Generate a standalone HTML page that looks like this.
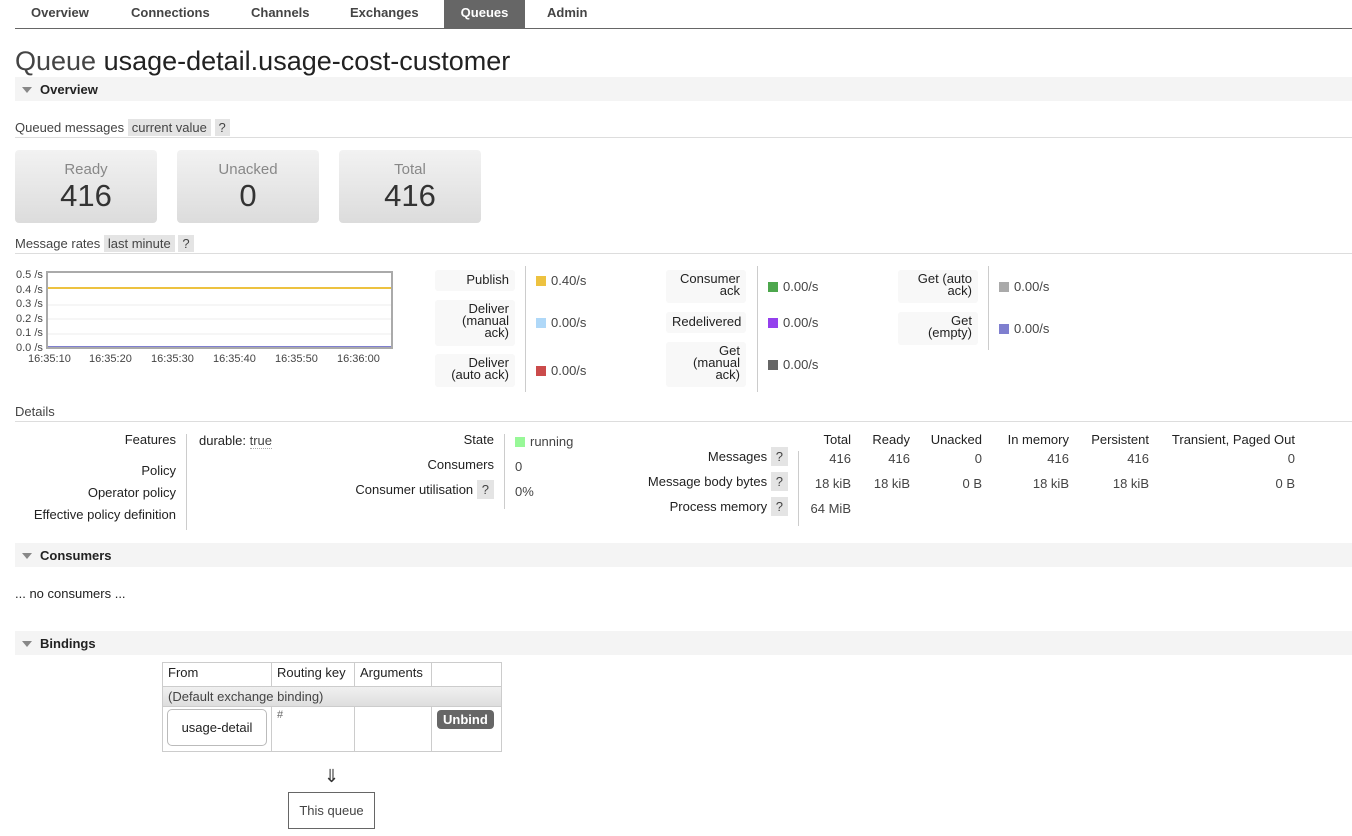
<!DOCTYPE html>
<html><head><meta charset="utf-8"><style>
*{margin:0;padding:0;box-sizing:border-box}
body{width:1352px;height:836px;position:relative;background:#fff;font-family:"Liberation Sans",sans-serif;font-size:13px;color:#222;overflow:hidden}
.a{position:absolute;white-space:nowrap}
.tab{position:absolute;top:0;height:28px;line-height:25px;font-weight:bold;color:#444;font-size:13px}
.bar{position:absolute;left:15px;right:0;height:24px;background:#f4f4f4}
.bar b{position:absolute;left:25px;top:5px;font-size:13px}
.tri{position:absolute;left:7px;top:10px;width:0;height:0;border-left:5px solid transparent;border-right:5px solid transparent;border-top:6px solid #888}
.hr{position:absolute;left:15px;right:0;height:1px;background:#ddd}
.pill{background:#e4e4e4;padding:1px 4px;color:#444}
.box{position:absolute;top:150px;width:142px;height:73px;border-radius:4px;background:linear-gradient(#f2f2f2,#dcdcdc);text-align:center;color:#888}
.box .l{font-size:15px;margin-top:11px}
.box .n{font-size:31px;color:#333;line-height:32px;margin-top:2px}
.lb{position:absolute;background:#f8f8f8;border-radius:3px;text-align:right;padding:3px 6px 0 6px;line-height:12px;font-size:13px;width:80px}
.sep{position:absolute;width:1px;background:#ccc}
.val{position:absolute;color:#444}
.sq{display:inline-block;width:10px;height:10px;margin-right:5px;vertical-align:-1px}
.r{text-align:right}
.g{color:#444}
.q{background:#e4e4e4;padding:2px 5px;color:#444}
td{border:1px solid #ccc;padding:2px 5px;vertical-align:top}
</style></head><body>
<div class="tab" style="left:31px">Overview</div>
<div class="tab" style="left:131px">Connections</div>
<div class="tab" style="left:251px">Channels</div>
<div class="tab" style="left:350px">Exchanges</div>
<div class="tab" style="left:444px;width:81px;background:#666;color:#fff;text-align:center">Queues</div>
<div class="tab" style="left:547px">Admin</div>
<div class="a" style="left:15px;right:0;top:28px;height:1px;background:#666"></div>

<div class="a" style="left:15px;top:46px;font-size:27px;color:#222"><span style="color:#444">Queue</span> usage-detail.usage-cost-customer</div>

<div class="bar" style="top:77px"><div class="tri"></div><b>Overview</b></div>

<div class="a" style="left:15px;top:120px;color:#444">Queued messages <span class="pill">current value</span> <span class="pill">?</span></div>
<div class="hr" style="top:137px"></div>
<div class="box" style="left:15px"><div class="l">Ready</div><div class="n">416</div></div>
<div class="box" style="left:177px"><div class="l">Unacked</div><div class="n">0</div></div>
<div class="box" style="left:339px"><div class="l">Total</div><div class="n">416</div></div>

<div class="a" style="left:15px;top:236px;color:#444">Message rates <span class="pill">last minute</span> <span class="pill">?</span></div>
<div class="hr" style="top:253px"></div>

<svg class="a" style="left:0;top:262px" width="400" height="105" font-family="Liberation Sans,sans-serif" font-size="11" fill="#444">
<text x="16" y="16">0.5 /s</text><text x="16" y="31">0.4 /s</text><text x="16" y="45">0.3 /s</text><text x="16" y="60">0.2 /s</text><text x="16" y="74">0.1 /s</text><text x="16" y="89">0.0 /s</text>
<g stroke="#eee"><line x1="48" y1="43" x2="391" y2="43"/><line x1="48" y1="57" x2="391" y2="57"/><line x1="48" y1="72" x2="391" y2="72"/></g>
<line x1="48" y1="26" x2="391" y2="26" stroke="#edc240" stroke-width="2"/>
<line x1="48" y1="85" x2="391" y2="85" stroke="#7f7fcf" stroke-width="2"/>
<rect x="47" y="10" width="345" height="76" fill="none" stroke="#aaa" stroke-width="2"/>
<text x="28" y="100">16:35:10</text><text x="89" y="100">16:35:20</text><text x="151" y="100">16:35:30</text><text x="213" y="100">16:35:40</text><text x="275" y="100">16:35:50</text><text x="337" y="100">16:36:00</text>
</svg>

<div class="lb" style="left:435px;top:270px;height:21px;padding-top:4px">Publish</div>
<div class="lb" style="left:435px;top:300px;height:46px">Deliver<br>(manual<br>ack)</div>
<div class="lb" style="left:435px;top:354px;height:33px">Deliver<br>(auto ack)</div>
<div class="sep" style="left:525px;top:266px;height:126px"></div>
<div class="val" style="left:536px;top:273px"><span class="sq" style="background:#edc240"></span>0.40/s</div>
<div class="val" style="left:536px;top:315px"><span class="sq" style="background:#afd8f8"></span>0.00/s</div>
<div class="val" style="left:536px;top:363px"><span class="sq" style="background:#cb4b4b"></span>0.00/s</div>

<div class="lb" style="left:666px;top:270px;height:33px">Consumer<br>ack</div>
<div class="lb" style="left:666px;top:312px;height:21px;padding-top:4px">Redelivered</div>
<div class="lb" style="left:666px;top:342px;height:45px">Get<br>(manual<br>ack)</div>
<div class="sep" style="left:757px;top:266px;height:126px"></div>
<div class="val" style="left:768px;top:279px"><span class="sq" style="background:#4da74d"></span>0.00/s</div>
<div class="val" style="left:768px;top:315px"><span class="sq" style="background:#9440ed"></span>0.00/s</div>
<div class="val" style="left:768px;top:357px"><span class="sq" style="background:#666"></span>0.00/s</div>

<div class="lb" style="left:898px;top:270px;height:33px">Get (auto<br>ack)</div>
<div class="lb" style="left:898px;top:312px;height:33px">Get<br>(empty)</div>
<div class="sep" style="left:988px;top:266px;height:84px"></div>
<div class="val" style="left:999px;top:279px"><span class="sq" style="background:#aaa"></span>0.00/s</div>
<div class="val" style="left:999px;top:321px"><span class="sq" style="background:#7f7fcf"></span>0.00/s</div>

<div class="a" style="left:15px;top:404px;color:#444">Details</div>
<div class="hr" style="top:421px"></div>
<div class="a r" style="left:0;width:176px;top:432px">Features</div>
<div class="a r" style="left:0;width:176px;top:463px">Policy</div>
<div class="a r" style="left:0;width:176px;top:485px">Operator policy</div>
<div class="a r" style="left:0;width:176px;top:507px">Effective policy definition</div>
<div class="sep" style="left:186px;top:434px;height:96px"></div>
<div class="a" style="left:199px;top:433px">durable: <span class="g" style="border-bottom:1px dotted #aaa">true</span></div>

<div class="a r" style="left:300px;width:194px;top:432px">State</div>
<div class="a r" style="left:300px;width:194px;top:457px">Consumers</div>
<div class="a r" style="left:300px;width:194px;top:482px">Consumer utilisation <span class="q">?</span></div>
<div class="sep" style="left:504px;top:434px;height:75px"></div>
<div class="a g" style="left:515px;top:434px"><span class="sq" style="background:#98f898"></span>running</div>
<div class="a g" style="left:515px;top:459px">0</div>
<div class="a g" style="left:515px;top:484px">0%</div>

<div class="a r" style="left:600px;width:188px;top:449px">Messages <span class="q">?</span></div>
<div class="a r" style="left:600px;width:188px;top:474px">Message body bytes <span class="q">?</span></div>
<div class="a r" style="left:600px;width:188px;top:499px">Process memory <span class="q">?</span></div>
<div class="sep" style="left:798px;top:451px;height:75px"></div>
<div class="a r" style="left:790px;width:61px;top:432px">Total</div>
<div class="a r" style="left:860px;width:50px;top:432px">Ready</div>
<div class="a r" style="left:920px;width:62px;top:432px">Unacked</div>
<div class="a r" style="left:990px;width:79px;top:432px">In memory</div>
<div class="a r" style="left:1080px;width:69px;top:432px">Persistent</div>
<div class="a r" style="left:1160px;width:135px;top:432px">Transient, Paged Out</div>
<div class="a r g" style="left:790px;width:61px;top:451px">416</div>
<div class="a r g" style="left:860px;width:50px;top:451px">416</div>
<div class="a r g" style="left:920px;width:62px;top:451px">0</div>
<div class="a r g" style="left:990px;width:79px;top:451px">416</div>
<div class="a r g" style="left:1080px;width:69px;top:451px">416</div>
<div class="a r g" style="left:1160px;width:135px;top:451px">0</div>
<div class="a r g" style="left:790px;width:61px;top:476px">18 kiB</div>
<div class="a r g" style="left:860px;width:50px;top:476px">18 kiB</div>
<div class="a r g" style="left:920px;width:62px;top:476px">0 B</div>
<div class="a r g" style="left:990px;width:79px;top:476px">18 kiB</div>
<div class="a r g" style="left:1080px;width:69px;top:476px">18 kiB</div>
<div class="a r g" style="left:1160px;width:135px;top:476px">0 B</div>
<div class="a r g" style="left:790px;width:61px;top:501px">64 MiB</div>

<div class="bar" style="top:543px"><div class="tri"></div><b>Consumers</b></div>
<div class="a" style="left:15px;top:586px">... no consumers ...</div>

<div class="bar" style="top:631px"><div class="tri"></div><b>Bindings</b></div>
<table class="a" style="left:162px;top:662px;border-collapse:collapse;width:340px">
<tr style="height:24px"><td style="width:109px">From</td><td style="width:83px">Routing key</td><td style="width:77px">Arguments</td><td></td></tr>
<tr style="height:20px;background:linear-gradient(#f0f0f0,#ddd)"><td colspan="4" style="color:#444;padding-top:2px">(Default exchange binding)</td></tr>
<tr style="height:45px"><td style="padding:2px 4px"><div style="border:1px solid #bbb;border-radius:5px;height:37px;line-height:35px;text-align:center">usage-detail</div></td><td style="font-size:11px;color:#666">#</td><td></td><td style="padding:3px 4px"><span style="display:inline-block;background:#666;color:#fff;font-weight:bold;border-radius:4px;padding:2px 6px;margin-left:1px">Unbind</span></td></tr>
</table>
<div class="a" style="left:324px;top:766px;font-size:18px;color:#333">⇓</div>
<div class="a" style="left:288px;top:792px;width:87px;height:37px;border:1px solid #666;text-align:center;line-height:35px;color:#444">This queue</div>
</body></html>
